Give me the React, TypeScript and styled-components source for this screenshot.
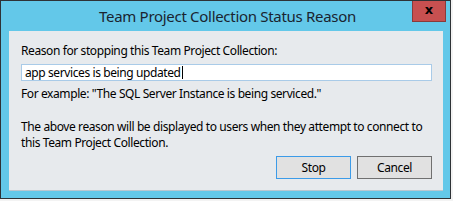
import React from "react";
import styled, { createGlobalStyle } from "styled-components";

const Global = createGlobalStyle`
  html, body {
    margin: 0;
    padding: 0;
    background: #f3f3f3;
  }
  body {
    font-family: "Noto Sans", "Liberation Sans", sans-serif;
  }
`;

const App = () => {
  return (
    <>
      <Global />
      <Window>
        <TitleBar>
          <span />
          <Title>Team Project Collection Status Reason</Title>
          <CloseButton>x</CloseButton>
        </TitleBar>
        <Client>
          <Label>Reason for stopping this Team Project Collection:</Label>
          <TextBox>
            app services is being updated
            <Caret />
          </TextBox>
          <Hint>For example: "The SQL Server Instance is being serviced."</Hint>
          <Note>
            The above reason will be displayed to users when they attempt to connect to
            <br />
            this Team Project Collection.
          </Note>
          <Buttons>
            <Button $focused>Stop</Button>
            <Button>Cancel</Button>
          </Buttons>
        </Client>
      </Window>
    </>
  );
};

const Window = styled.div`
  box-sizing: border-box;
  width: 451px;
  height: 199px;
  border: 1px solid #2e3236;
  background: #63c8e9;
  display: flex;
  flex-direction: column;
  padding: 0 7px 7px 8px;
`;

const TitleBar = styled.div`
  height: 30px;
  display: grid;
  grid-template-columns: 1fr auto 1fr;
  align-items: start;
  margin-right: -3px;
`;

const Title = styled.div`
  font-size: 15px;
  letter-spacing: -0.3px;
  line-height: 30px;
  color: #1a2430;
  white-space: nowrap;
`;

const CloseButton = styled.div`
  justify-self: end;
  box-sizing: border-box;
  width: 34px;
  height: 21px;
  background: #c75050;
  border: 1px solid #8a3a3a;
  border-top: none;
  color: #000;
  font-family: "DejaVu Sans", sans-serif;
  font-weight: bold;
  font-size: 13px;
  line-height: 17px;
  text-align: center;
`;

const Client = styled.div`
  flex: 1;
  background: #e7eaed;
  border-bottom: 1px solid #b9c6d0;
  padding: 12px 11px 0 12px;
  display: flex;
  flex-direction: column;
  font-size: 12px;
  letter-spacing: -0.4px;
  line-height: 15px;
  color: #000;
  white-space: nowrap;
`;

const Label = styled.div``;

const TextBox = styled.div`
  box-sizing: border-box;
  margin-top: 6px;
  height: 17px;
  background: #fff;
  border: 1px solid #a9cbe8;
  padding: 0 3px;
  line-height: 15px;
  display: flex;
  align-items: center;
  white-space: pre;
`;

const Caret = styled.span`
  display: inline-block;
  width: 1px;
  height: 13px;
  background: #000;
  margin-left: 1px;
`;

const Hint = styled.div`
  margin-top: 5px;
`;

const Note = styled.div`
  margin-top: 18px;
  line-height: 16px;
`;

const Buttons = styled.div`
  margin-top: 5px;
  display: flex;
  justify-content: flex-end;
  gap: 6px;
`;

const Button = styled.div<{ $focused?: boolean }>`
  box-sizing: border-box;
  width: 75px;
  height: 23px;
  background: #e1e1e1;
  border: 1px solid ${(p) => (p.$focused ? "#3c9be8" : "#707070")};
  display: flex;
  align-items: center;
  justify-content: center;
  font-size: 12px;
`;

export default App;
